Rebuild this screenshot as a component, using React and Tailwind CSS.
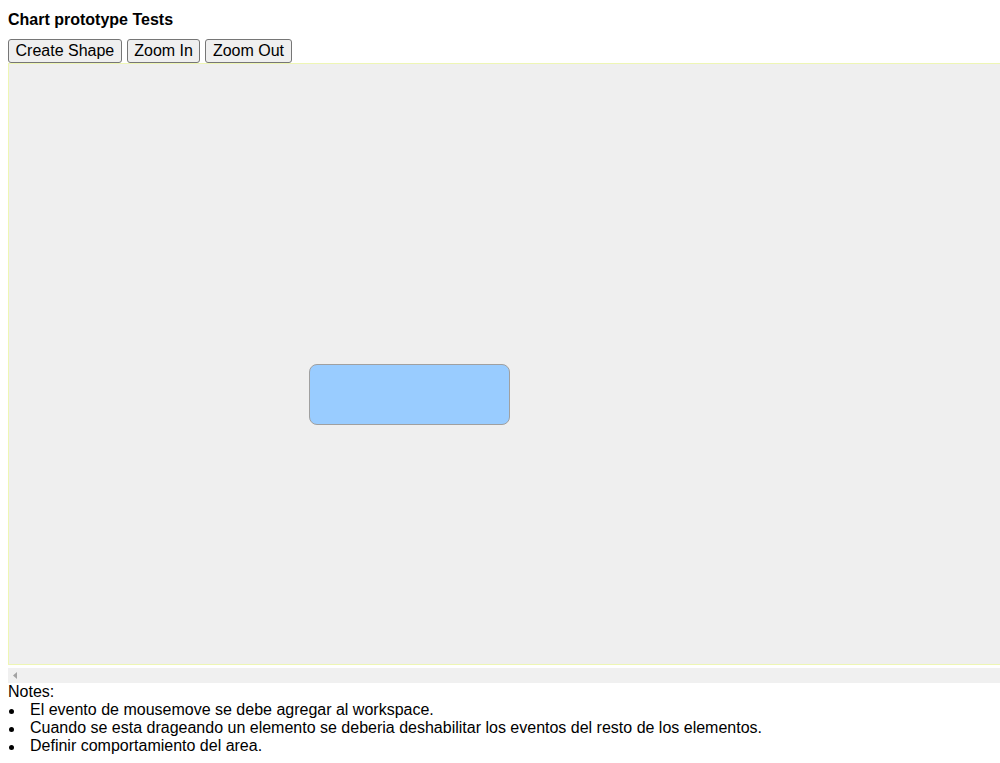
export default function App() {
  const btn =
    "h-[24px] px-[6.5px] bg-[#efefef] border border-[#767676] rounded-[3px] text-[16px] leading-[18px] text-black";
  const items = [
    "El evento de mousemove se debe agregar al workspace.",
    "Cuando se esta drageando un elemento se deberia deshabilitar los eventos del resto de los elementos.",
    "Definir comportamiento del area.",
  ];
  return (
    <div
      className="px-[8px] pt-[11px] text-[16px] text-black bg-white min-h-[763px]"
      style={{ fontFamily: '"Liberation Sans", Arial, sans-serif' }}
    >
      <div className="h-[18px] leading-[18px] font-bold">Chart prototype Tests</div>
      <div className="mt-[10px] flex gap-[5px]">
        <button className={btn}>Create Shape</button>
        <button className={btn}>Zoom In</button>
        <button className={btn}>Zoom Out</button>
      </div>
      <div className="w-[992px]">
        <div className="relative h-[602px] bg-[#efefef] border-l border-t border-b border-[#eef6b4]">
          <div className="absolute left-[300px] top-[300px] w-[201px] h-[61px] bg-[#99ccff] border border-[#a0a0a0] rounded-[8px]" />
        </div>
        <div className="mt-[3px] h-[15px] bg-[#f0f0f0] flex items-center pl-[5px]">
          <svg width="4" height="7" viewBox="0 0 4 7">
            <path d="M4 0 L0 3.5 L4 7 Z" fill="#a3a3a3" />
          </svg>
        </div>
      </div>
      <div className="h-[18px] leading-[18px]">Notes:</div>
      <ul className="leading-[18px]">
        {items.map((t) => (
          <li key={t} className="flex items-center">
            <span className="w-[22px] flex items-center">
              <span className="ml-[1px] mt-[2px] w-[5px] h-[5px] rounded-full bg-black" />
            </span>
            <span>{t}</span>
          </li>
        ))}
      </ul>
    </div>
  );
}
